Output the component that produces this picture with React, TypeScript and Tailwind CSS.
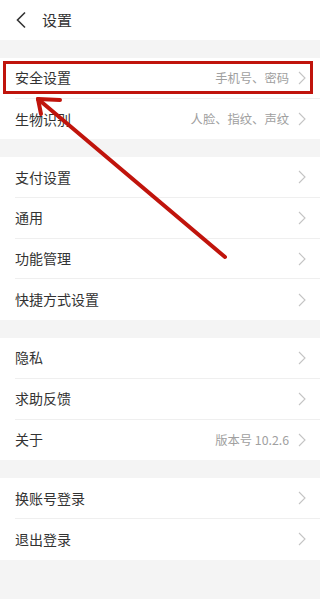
import React from "react";

type Row = { label: string; value?: string };

const groups: Row[][] = [
  [
    { label: "安全设置", value: "手机号、密码" },
    { label: "生物识别", value: "人脸、指纹、声纹" },
  ],
  [{ label: "支付设置" }, { label: "通用" }, { label: "功能管理" }, { label: "快捷方式设置" }],
  [{ label: "隐私" }, { label: "求助反馈" }, { label: "关于", value: "版本号 10.2.6" }],
  [{ label: "换账号登录" }, { label: "退出登录" }],
];

function Chevron() {
  return (
    <svg width="8" height="14" viewBox="0 0 8 14" className="ml-[9px] shrink-0">
      <path d="M1 1l6 6-6 6" fill="none" stroke="#c4c4c4" strokeWidth="1.1" />
    </svg>
  );
}

function SettingRow({ row, last }: { row: Row; last: boolean }) {
  return (
    <div className="flex h-[40.7px] items-stretch pl-[15px]">
      <div
        className={
          "flex flex-1 items-center pr-[14px] " + (last ? "" : "border-b border-[#efefef]")
        }
      >
        <span className="flex-1 text-[14px] text-[#333333]">{row.label}</span>
        {row.value && <span className="text-[12.3px] text-[#a0a0a0]">{row.value}</span>}
        <Chevron />
      </div>
    </div>
  );
}

export default function App() {
  return (
    <div
      className="relative h-[599px] w-[320px] overflow-hidden bg-[#f4f4f4]"
      style={{ fontFamily: '"Noto Sans CJK SC", "Noto Sans", sans-serif' }}
    >
      <header className="flex h-[40px] items-center bg-white pl-[15px]">
        <svg width="12" height="18" viewBox="0 0 12 18">
          <path d="M10 1.5L2.5 9l7.5 7.5" fill="none" stroke="#333" strokeWidth="1.6" />
        </svg>
        <span className="ml-[15px] text-[15px] text-[#333333]">设置</span>
      </header>

      <div className="flex flex-col gap-[18px] pt-[18px]">
        {groups.map((g, i) => (
          <div key={i} className="bg-white">
            {g.map((row, j) => (
              <SettingRow key={row.label} row={row} last={j === g.length - 1} />
            ))}
          </div>
        ))}
      </div>

      {/* annotation: red box + arrow */}
      <div className="absolute left-[3px] top-[61px] h-[33px] w-[310px] border-[3px] border-[#c0140c]" />
      <svg className="absolute left-0 top-0" width="320" height="599" viewBox="0 0 320 599">
        <g stroke="#c0140c" strokeWidth="4" strokeLinecap="round" fill="none">
          <path d="M225 257L38 99" />
          <path d="M38 99L60 100" />
          <path d="M38 99L41 114" />
        </g>
      </svg>
    </div>
  );
}
